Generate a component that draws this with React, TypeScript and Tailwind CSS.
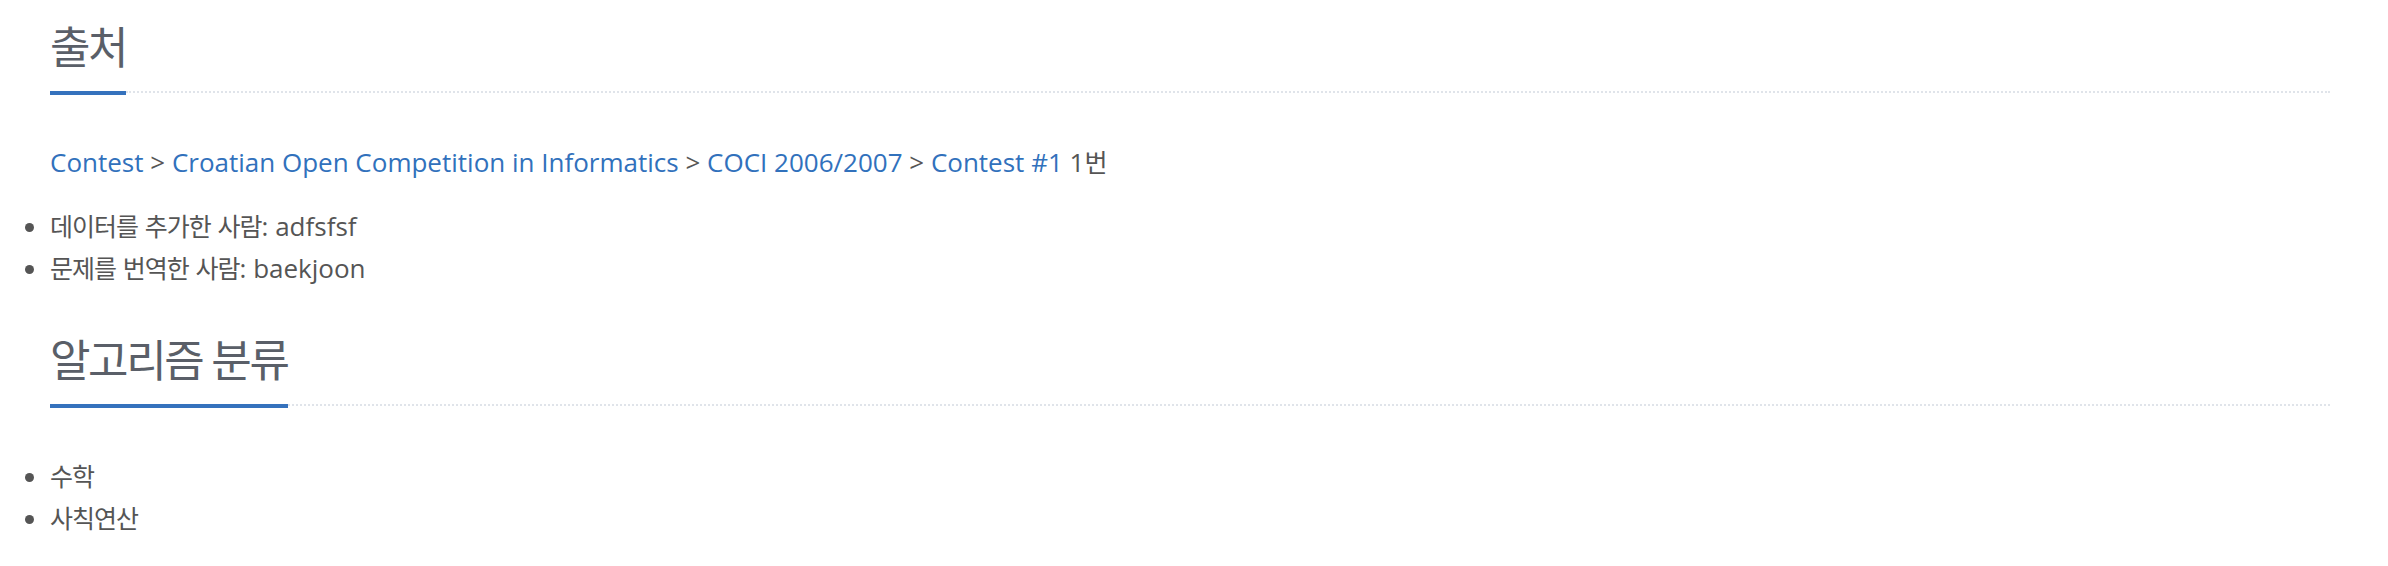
import React from 'react'

// Korean runs get the CJK face, sized so they sit with Open Sans
function Mixed({ text }: { text: string }) {
  return (
    <>
      {text.split(/([가-힣]+)/).map((part, i) =>
        /[가-힣]/.test(part) ? (
          <span key={i} className="font-['Noto_Sans_CJK_KR'] text-[25px] leading-none tracking-[-1px]">
            {part}
          </span>
        ) : (
          part
        )
      )}
    </>
  )
}

function Headline({ title }: { title: string }) {
  return (
    <div className="flex items-end">
      <h3 className="border-b-4 border-[#3572bd] pb-[23px] font-['Open_Sans','Noto_Sans_CJK_KR',sans-serif] text-[44px] leading-[42px] tracking-[-2.4px] text-[#5a5f68]">
        {title}
      </h3>
      <div className="mb-[2px] flex-1 border-b-2 border-dotted border-[#e0e4ea]" />
    </div>
  )
}

function Link({ children }: { children: React.ReactNode }) {
  return <a href="#" className="text-[#3171bc]">{children}</a>
}

export default function App() {
  const credits = [
    '데이터를 추가한 사람: adfsfsf',
    '문제를 번역한 사람: baekjoon',
  ]
  const tags = ['수학', '사칙연산']

  return (
    <div className="min-h-[566px] w-full bg-white pl-[50px] pr-[58px] pt-[26px] font-['Open_Sans',sans-serif] text-[26px] text-[#555]">
      {/* 출처 */}
      <section>
        <Headline title="출처" />
        <p className="mt-[47px] leading-[40px]">
          <Link>Contest</Link> &gt; <Link>Croatian Open Competition in Informatics</Link> &gt;{' '}
          <Link>COCI 2006/2007</Link> &gt; <Link>Contest #1</Link> <Mixed text="1번" />
        </p>
        <ul className="mt-[23px] list-outside list-disc leading-[42px]">
          {credits.map((c) => (
            <li key={c}>
              <Mixed text={c} />
            </li>
          ))}
        </ul>
      </section>

      {/* 알고리즘 분류 */}
      <section className="mt-[50px]">
        <Headline title="알고리즘 분류" />
        <ul className="mt-[47px] list-outside list-disc leading-[42px]">
          {tags.map((t) => (
            <li key={t}>
              <Mixed text={t} />
            </li>
          ))}
        </ul>
      </section>
    </div>
  )
}
